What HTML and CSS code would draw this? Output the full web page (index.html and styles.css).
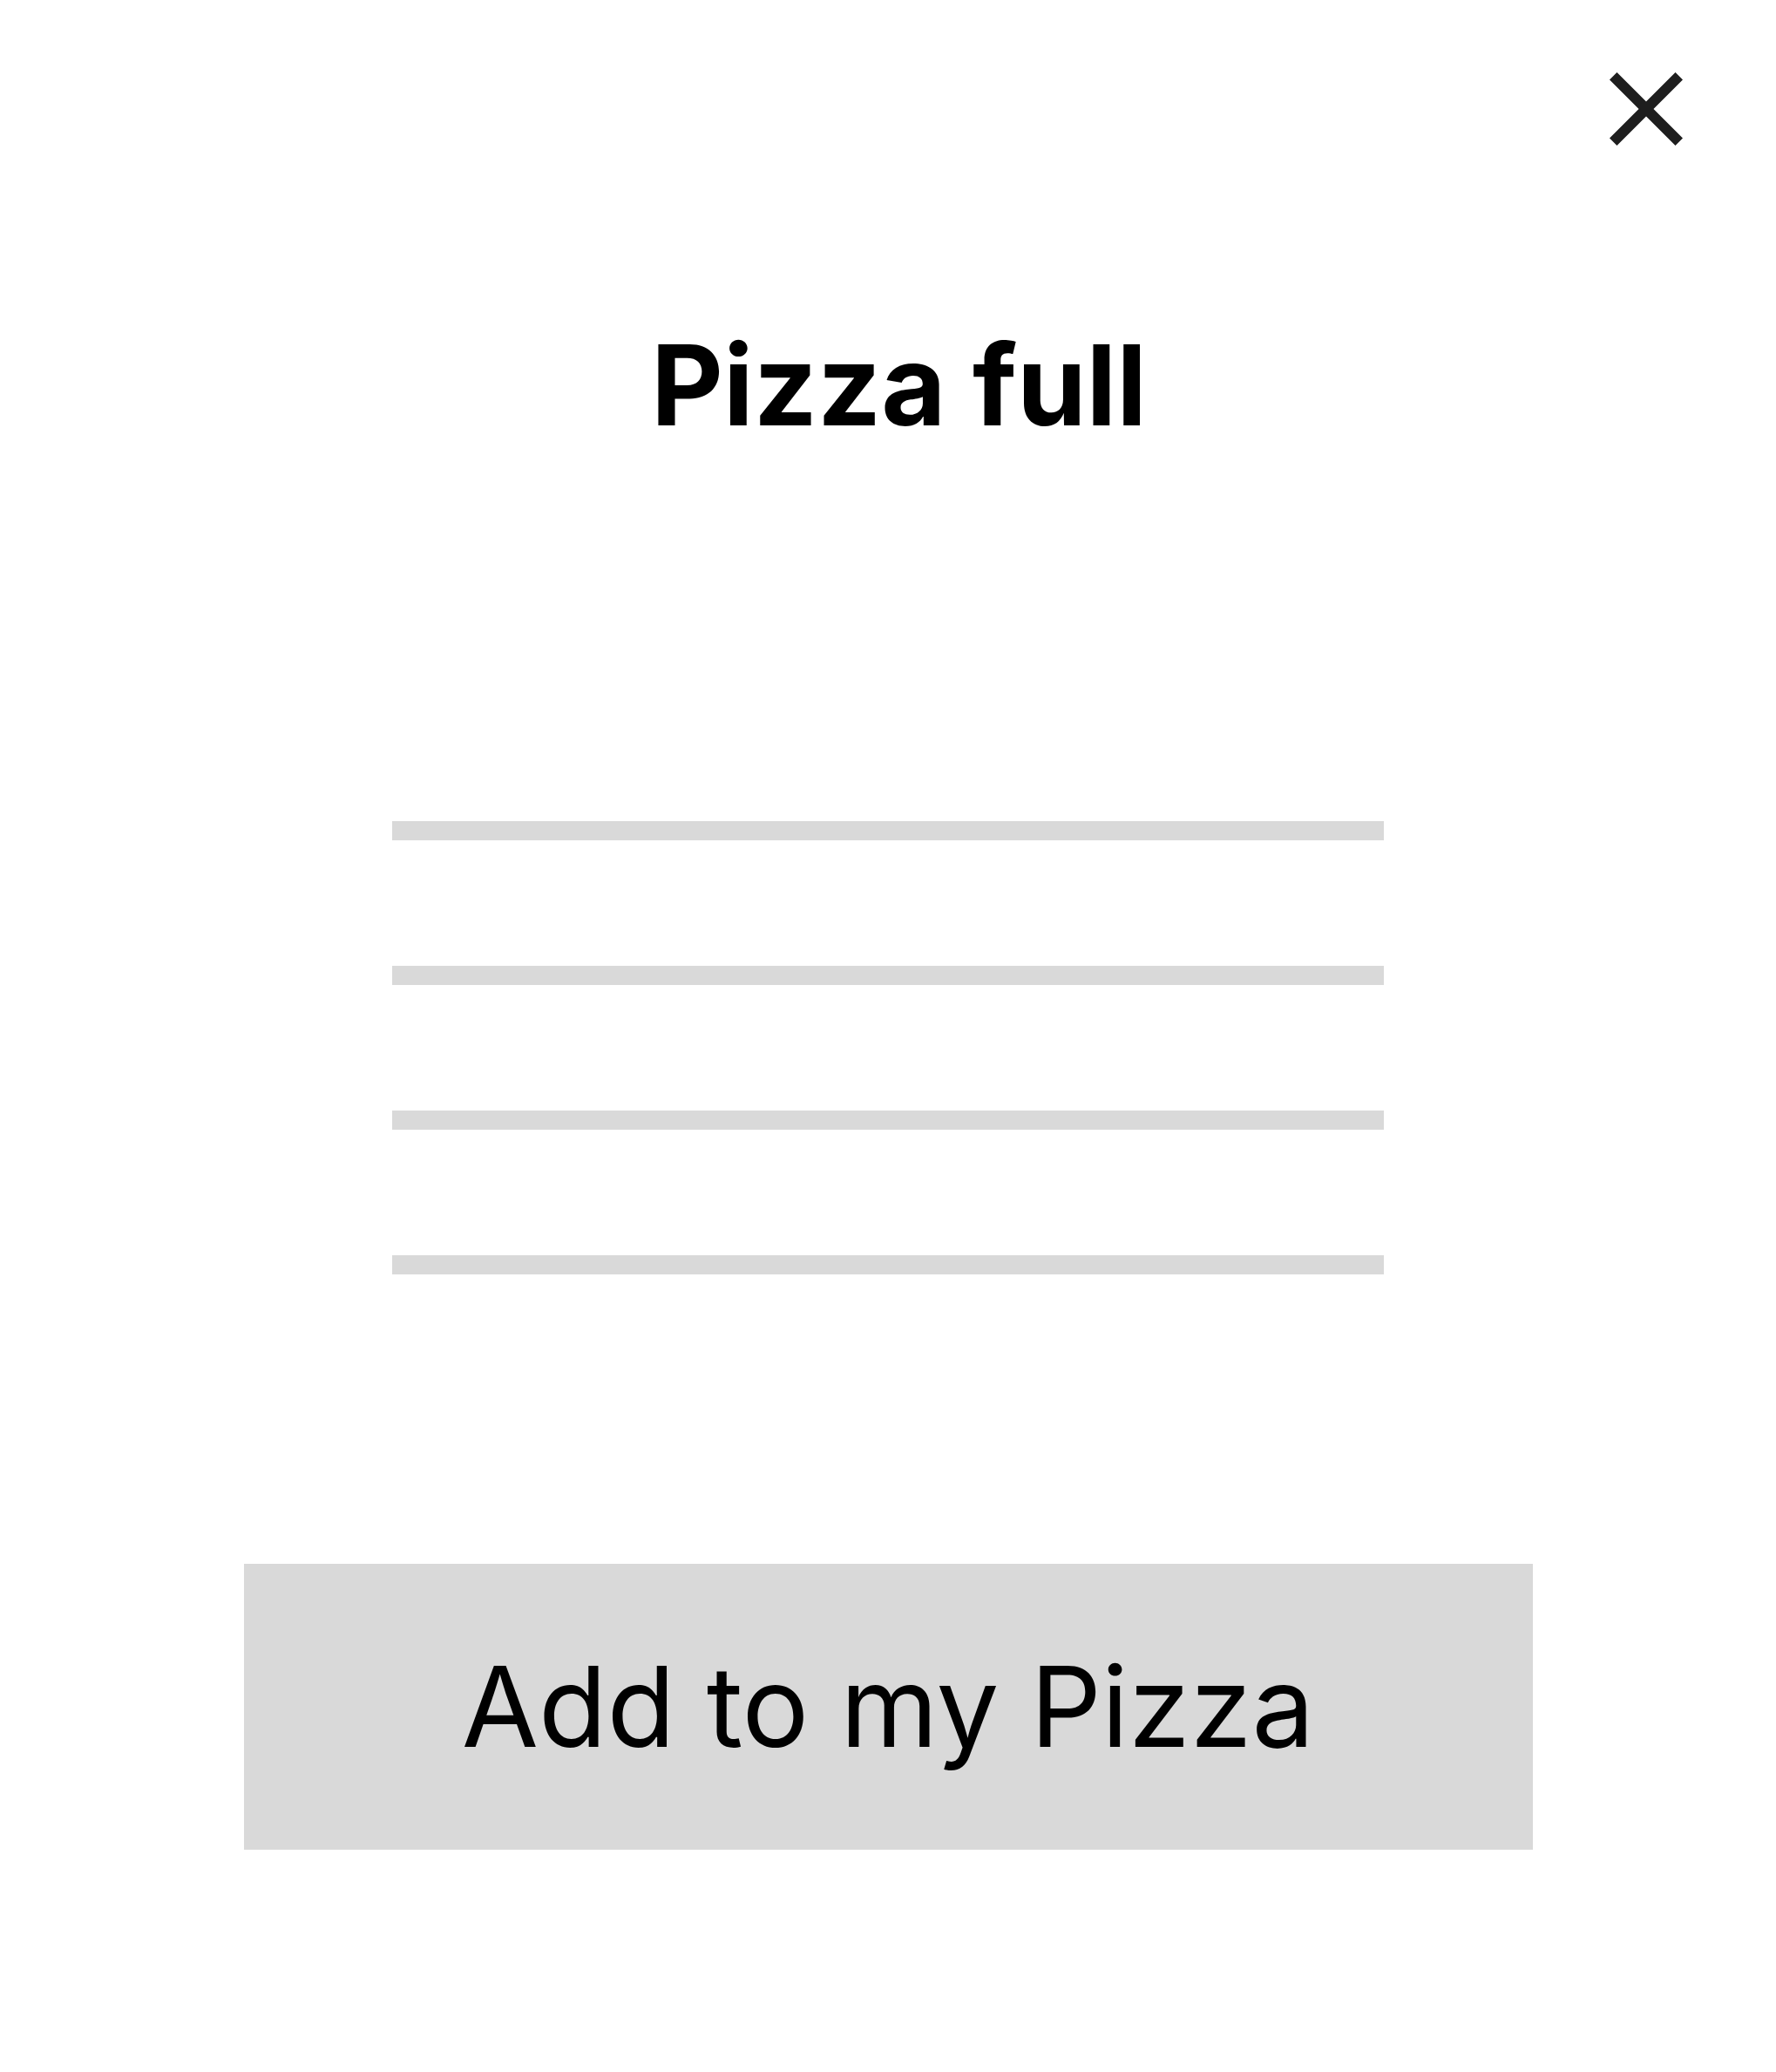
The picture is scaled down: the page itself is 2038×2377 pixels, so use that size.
FILE: index.html
```html
<!DOCTYPE html>
<html lang="en">
<head>
<meta charset="utf-8">
<title>Pizza full</title>
<link rel="stylesheet" href="styles.css">
</head>
<body>
<div class="modal">
  <button class="close" aria-label="Close">
    <svg viewBox="0 0 24 24" width="144" height="144"><path d="M19 6.41L17.59 5 12 10.59 6.41 5 5 6.41 10.59 12 5 17.59 6.41 19 12 13.41 17.59 19 19 17.59 13.41 12z" fill="#1e1e1e"/></svg>
  </button>
  <h1 class="title">Pizza full</h1>
  <div class="lines">
    <div class="line"></div>
    <div class="line"></div>
    <div class="line"></div>
    <div class="line"></div>
  </div>
  <button class="add">Add to my Pizza</button>
</div>
</body>
</html>
```
FILE: styles.css
```css
html, body {
  margin: 0;
  padding: 0;
  background: #ffffff;
}
body {
  font-family: Inter, "Noto Sans", sans-serif;
  color: #000;
}
.modal {
  position: relative;
  width: 2038px;
  height: 2377px;
  display: flex;
  flex-direction: column;
  align-items: center;
  padding-top: 378px;
  box-sizing: border-box;
}
.close {
  position: absolute;
  top: 53px;
  right: 77px;
  width: 144px;
  height: 144px;
  padding: 0;
  border: 0;
  background: none;
}
.close svg {
  display: block;
}
.title {
  margin: 0;
  padding-left: 25px;
  font-size: 128px;
  line-height: 128px;
  font-weight: 700;
  text-align: center;
}
.lines {
  margin-top: 436px;
  display: flex;
  flex-direction: column;
  gap: 144px;
}
.line {
  width: 1138px;
  height: 22px;
  background: #d9d9d9;
}
.add {
  margin-top: 332px;
  width: 1479px;
  height: 328px;
  border: 0;
  padding: 0;
  background: #d9d9d9;
  font-family: Inter, "Noto Sans", sans-serif;
  font-size: 128px;
  font-weight: 400;
  color: #000;
  line-height: 328px;
}
```
